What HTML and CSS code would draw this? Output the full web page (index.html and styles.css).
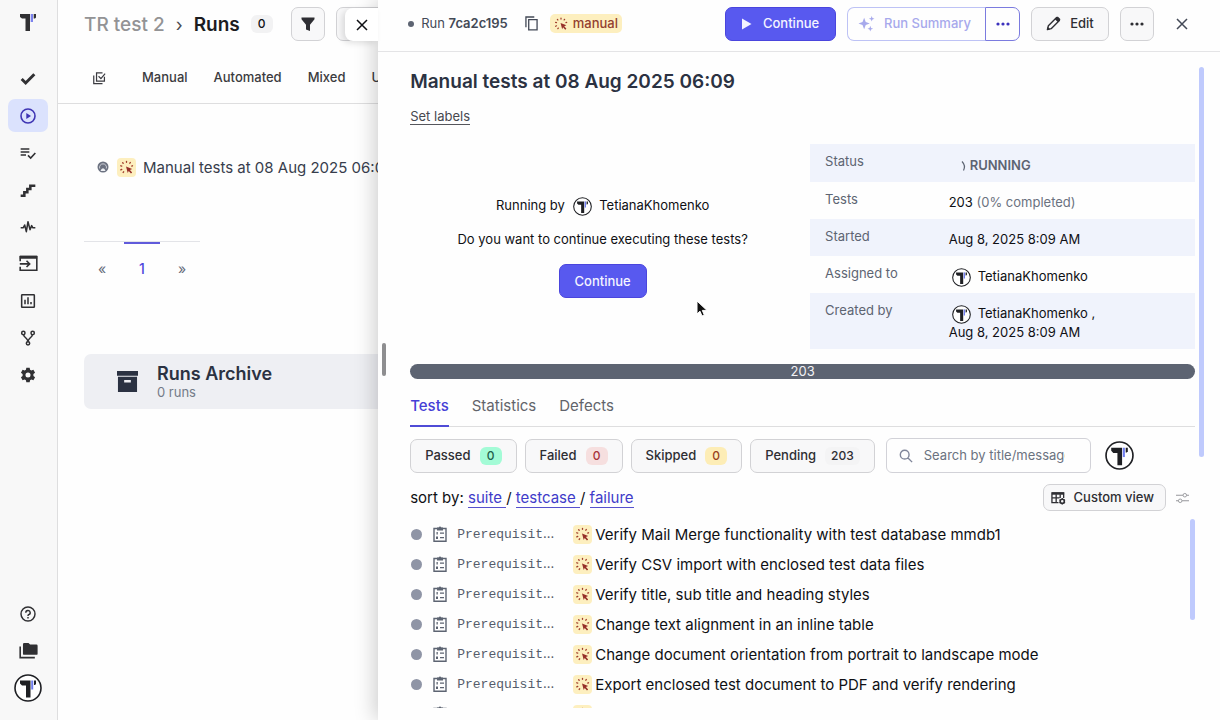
FILE: index.html
```html
<!DOCTYPE html>
<html lang="en">
<head>
<meta charset="utf-8">
<title>Runs - TR test 2</title>
<link rel="stylesheet" href="styles.css">
</head>
<body>
<svg class="sprite" aria-hidden="true">
  <symbol id="logo" viewBox="0 0 16 17"><path fill="currentColor" d="M0 0h10v17H5.500V4.500H2L0 3z"/><path fill="#7c83ee" d="M10.700 0H13v8h-2.300z"/><path fill="currentColor" d="M13.700 0H16v3.500l-1 1h-1.300z"/></symbol>
  <symbol id="avatar" viewBox="0 0 28 28"><circle cx="14" cy="14" r="13" fill="#fff" stroke="#1f2024" stroke-width="1.600"/><path fill="#1f2024" d="M6 6.500h10.500v17H12v-12H8l-2-2z"/><path fill="#6f7df0" d="M17.200 6.500h2v9h-2z"/><path fill="#1f2024" d="M20 6.500h2v3.500l-1 1h-1z"/></symbol>
  <symbol id="check" viewBox="0 0 24 24"><path fill="none" stroke="currentColor" stroke-width="4.400" d="M2.500 12l6 6L21.500 5"/></symbol>
  <symbol id="play-circle" viewBox="0 0 24 24"><circle cx="12" cy="12" r="10.500" fill="none" stroke="currentColor" stroke-width="2.400"/><path fill="currentColor" d="M9.500 7.500l7 4.500-7 4.500z"/></symbol>
  <symbol id="list-check" viewBox="0 0 24 24"><path fill="none" stroke="currentColor" stroke-width="2.400" d="M1 6h13M1 10.500h13M1 15h8M12 15.500l4 4 7-7.500"/></symbol>
  <symbol id="stairs" viewBox="0 0 24 24"><path fill="none" stroke="currentColor" stroke-width="3.800" d="M1 20.500h5.500v-5H11v-5h4.500v-5H23"/></symbol>
  <symbol id="pulse" viewBox="0 0 24 24"><path fill="none" stroke="currentColor" stroke-width="2.300" stroke-linejoin="round" d="M1 13h4l2-4 2.500 10L12 4l3 12 2.500-6 1.500 3h4"/></symbol>
  <symbol id="import" viewBox="0 0 24 24"><path fill="none" stroke="currentColor" stroke-width="2" d="M1.500 9V3.500h21v17h-21V16M1 12.500h12M9.500 8.500l4 4-4 4"/><path fill="currentColor" d="M1 2h22v4H1z"/></symbol>
  <symbol id="chart" viewBox="0 0 24 24"><rect x="2.500" y="2.500" width="19" height="19" rx="1" fill="none" stroke="currentColor" stroke-width="2.300"/><path stroke="currentColor" stroke-width="2.300" d="M7.500 17v-7M12 17V6.500M16.500 17v-3.500"/></symbol>
  <symbol id="fork" viewBox="0 0 24 24"><g fill="none" stroke="currentColor" stroke-width="2.300"><circle cx="5" cy="4.500" r="2.500"/><circle cx="19" cy="4.500" r="2.500"/><circle cx="12" cy="20" r="2.500"/><path d="M5.500 7c0 4.500 6.500 5 6.500 10.500C12 12 18.500 11.500 18.500 7"/></g></symbol>
  <symbol id="gear" viewBox="0 0 24 24"><path fill="currentColor" fill-rule="evenodd" d="M9.500 1h5l.6 3.200 1.900 1.100 3.100-1.100 2.500 4.300-2.500 2.100v2.800l2.500 2.100-2.500 4.300-3.100-1.100-1.900 1.100-.6 3.200h-5l-.6-3.200L7 18.700l-3.100 1.100-2.500-4.300 2.500-2.100v-2.800L1.400 8.500l2.500-4.300L7 5.300l1.900-1.100zM12 8.200a3.800 3.800 0 100 7.600 3.800 3.800 0 000-7.600z"/></symbol>
  <symbol id="help" viewBox="0 0 24 24"><g fill="none" stroke="currentColor" stroke-width="2.200"><circle cx="12" cy="12" r="10.500"/><path d="M8.700 10a3.300 3.300 0 113.900 3.200q-.6.200-.6 1.800"/></g><path fill="currentColor" d="M10.900 16.500h2.200v2.200h-2.200z"/></symbol>
  <symbol id="folders" viewBox="0 0 24 24"><path fill="currentColor" d="M5 4q0-1.500 1.500-1.500H12l2 2h8q1.500 0 1.500 1.500v10q0 1.500-1.500 1.500H6.500Q5 17.500 5 16z"/><path fill="none" stroke="currentColor" stroke-width="2" d="M1.500 7v14H20"/></symbol>
  <symbol id="filter" viewBox="0 0 16 16"><path fill="currentColor" d="M1.500 1.500h13v1.700L10 8.800V15l-4-1.500V8.800L1.500 3.200z"/></symbol>
  <symbol id="close" viewBox="0 0 12 12"><path stroke="currentColor" stroke-width="1.500" d="M1 1l10 10M11 1L1 11"/></symbol>
  <symbol id="multi" viewBox="0 0 16 16"><path fill="none" stroke="currentColor" stroke-width="1.400" d="M2 5v9.300h10M12 2.200H5.200V11.500h9V6.500M7.500 6l2.700 2.700L15 3"/></symbol>
  <symbol id="tap" viewBox="0 0 20 20"><path d="M5 8.500l-1-.3M5 12l-1 .5M6.500 5.500L6 5M10 4.500v-1M13.500 5.500l.5-.7M15.500 8.500l.8-.3M7 14.500l-.5.700" stroke="#a03d2c" stroke-width="1.400" stroke-linecap="round"/><path d="M9.500 9l6.500 2.500-2.400 1 2.400 2.700-1.300 1.100-2.400-2.600-1 2.200z" fill="#97302a"/></symbol>
  <symbol id="archive" viewBox="0 0 22 22"><path fill="currentColor" fill-rule="evenodd" d="M0 0h22v5H0zM1 6h20v16H1zM7.500 9.500V12h7V9.500z"/></symbol>
  <symbol id="copy" viewBox="0 0 14 16"><path fill="none" stroke="currentColor" stroke-width="1.400" d="M1 12V1h9M4 3.800h9v11H4z"/></symbol>
  <symbol id="play" viewBox="0 0 10 12"><path fill="currentColor" d="M0 .5L9.500 6 0 11.500z"/></symbol>
  <symbol id="sparkles" viewBox="0 0 18 18"><path fill="currentColor" d="M6.500 3l1.700 4.300L12.500 9l-4.300 1.700L6.500 15l-1.700-4.300L.5 9l4.300-1.700zM14.500 1l.8 2.200 2.200.8-2.200.8-.8 2.200-.8-2.200-2.200-.8 2.200-.8zM13 11.500l.8 2.200 2.200.8-2.200.8-.8 2.200-.8-2.200-2.200-.8 2.200-.8z"/></symbol>
  <symbol id="dots" viewBox="0 0 14 4"><g fill="currentColor"><circle cx="2" cy="2" r="1.600"/><circle cx="7" cy="2" r="1.600"/><circle cx="12" cy="2" r="1.600"/></g></symbol>
  <symbol id="pencil" viewBox="0 0 16 16"><path fill="none" stroke="currentColor" stroke-width="1.500" stroke-linejoin="round" d="M1.500 14.500l1-4L11.300 1.700l3 3-8.800 8.800z"/><path fill="currentColor" d="M9.500 3.500l3-3 3 3-3 3zM1 15l.8-3.500L4.500 14z"/></symbol>
  <symbol id="search" viewBox="0 0 16 16"><path fill="none" stroke="currentColor" stroke-width="1.600" d="M6.500 1.500a5 5 0 100 10 5 5 0 000-10zM10 10l5 5"/></symbol>
  <symbol id="table-gear" viewBox="0 0 16 14"><path fill="none" stroke="currentColor" stroke-width="1.400" d="M8 12H1V1.500h12.500V7M1 6.800h8M5.500 3v9M9.800 3v4"/><path fill="currentColor" d="M1 1h13v2.500H1z"/><circle cx="12" cy="10.500" r="2.200" fill="none" stroke="currentColor" stroke-width="1.700"/><path stroke="currentColor" stroke-width="1.300" d="M12 7v1M12 13v1M9 8.800l.9.500M14.100 11.700l.9.500M15 8.800l-.9.500M9.900 11.700l-.9.500"/></symbol>
  <symbol id="sliders" viewBox="0 0 14 12"><path fill="none" stroke="currentColor" stroke-width="1.100" d="M0 3h7.500M11.500 3H14M0 9h2.500M6.500 9H14"/><circle cx="9.500" cy="3" r="1.900" fill="none" stroke="currentColor"/><circle cx="4.500" cy="9" r="1.900" fill="none" stroke="currentColor"/></symbol>
  <symbol id="clipboard" viewBox="0 0 14 16"><path fill="none" stroke="currentColor" stroke-width="1.400" d="M1 2.500h12v12.700H1z"/><path fill="currentColor" d="M4 1.500h1.700a1.400 1.400 0 012.600 0H10v3H4zM7 6.500h4v1.300H7zM7 11h4v1.300H7zM3.500 6h1.300v2.500H3.500zM3 10.500h2V13H3z"/></symbol>
  <symbol id="running" viewBox="0 0 12 12"><circle cx="6" cy="6" r="5.500" fill="#6b7180"/><path fill="none" stroke="#e4e6eb" stroke-width=".8" d="M2.700 7.500a3.500 3.500 0 116.600 0"/><path fill="#eceef2" d="M3.500 10l1-2 1.500-.8L7.500 8l1 2z"/></symbol>
</svg>

<nav class="sidebar" aria-label="Main">
  <a class="logo" href="#" aria-label="Home"><svg><use href="#logo"/></svg></a>
  <div class="nav-group">
    <a href="#" aria-label="Tests"><svg><use href="#check"/></svg></a>
    <a class="active" href="#" aria-label="Runs"><svg><use href="#play-circle"/></svg></a>
    <a href="#" aria-label="Plans"><svg><use href="#list-check"/></svg></a>
    <a href="#" aria-label="Steps"><svg><use href="#stairs"/></svg></a>
    <a href="#" aria-label="Pulse"><svg><use href="#pulse"/></svg></a>
    <a href="#" aria-label="Imports"><svg class="wide"><use href="#import"/></svg></a>
    <a href="#" aria-label="Analytics"><svg><use href="#chart"/></svg></a>
    <a href="#" aria-label="Branches"><svg><use href="#fork"/></svg></a>
    <a href="#" aria-label="Settings"><svg><use href="#gear"/></svg></a>
  </div>
  <div class="nav-group nav-bottom">
    <a href="#" aria-label="Help"><svg><use href="#help"/></svg></a>
    <a href="#" aria-label="Projects"><svg class="wide"><use href="#folders"/></svg></a>
    <a href="#" aria-label="Profile"><svg class="profile"><use href="#avatar"/></svg></a>
  </div>
</nav>

<main class="runs">
  <header class="runs-head">
    <a class="crumb" href="#">TR test 2</a>
    <span class="sep">›</span>
    <h1>Runs</h1>
    <span class="count">0</span>
    <button class="btn square filter-btn" aria-label="Filter"><svg><use href="#filter"/></svg></button>
    <button class="btn query-btn" aria-label="Query"></button>
  </header>
  <div class="runs-tabs">
    <button aria-label="Select multiple"><svg><use href="#multi"/></svg></button>
    <a href="#">Manual</a>
    <a href="#">Automated</a>
    <a href="#">Mixed</a>
    <a href="#">Unfinished</a>
  </div>
  <div class="runs-body">
    <a class="run-row" href="#">
      <svg class="state"><use href="#running"/></svg>
      <svg class="tap"><use href="#tap"/></svg>
      <span>Manual tests at 08 Aug 2025 06:09</span>
    </a>
    <div class="pager">
      <button aria-label="Previous">«</button>
      <button class="current">1</button>
      <button aria-label="Next">»</button>
    </div>
    <a class="archive" href="#">
      <svg><use href="#archive"/></svg>
      <span><strong>Runs Archive</strong><small>0 runs</small></span>
    </a>
  </div>
</main>

<aside class="panel">
  <button class="panel-close" aria-label="Close panel"><svg class="x"><use href="#close"/></svg></button>
  <span class="grip"></span>
  <header class="panel-head">
    <span class="dot"></span>
    <span class="run-id">Run <b>7ca2c195</b></span>
    <button class="icon-btn copy" aria-label="Copy id"><svg><use href="#copy"/></svg></button>
    <span class="kind"><svg><use href="#tap"/></svg>manual</span>
    <div class="actions">
      <button class="btn primary launch"><svg><use href="#play"/></svg>Continue</button>
      <div class="split">
        <button class="summary" disabled><svg><use href="#sparkles"/></svg>Run Summary</button>
        <button class="summary-more" aria-label="Summary options"><svg class="dots"><use href="#dots"/></svg></button>
      </div>
      <button class="btn edit"><svg><use href="#pencil"/></svg>Edit</button>
      <button class="btn square" aria-label="More"><svg class="dots"><use href="#dots"/></svg></button>
      <button class="icon-btn end-close" aria-label="Close"><svg class="x"><use href="#close"/></svg></button>
    </div>
  </header>
  <div class="panel-body">
    <h2>Manual tests at 08 Aug 2025 06:09</h2>
    <a class="set-labels" href="#">Set labels</a>

    <section class="overview">
      <div class="resume">
        <p>Running by <svg class="user"><use href="#avatar"/></svg> TetianaKhomenko</p>
        <p>Do you want to continue executing these tests?</p>
        <button class="btn primary">Continue</button>
      </div>
      <table class="facts">
        <tr><th scope="row">Status</th><td class="status"><svg viewBox="0 0 6 12"><path d="M1 1.500q4 4 1.500 9" fill="none" stroke="currentColor" stroke-width="1.200"/></svg>RUNNING</td></tr>
        <tr><th scope="row">Tests</th><td>203 <span class="muted">(0% completed)</span></td></tr>
        <tr><th scope="row">Started</th><td>Aug 8, 2025 8:09 AM</td></tr>
        <tr><th scope="row">Assigned to</th><td><svg class="user"><use href="#avatar"/></svg>TetianaKhomenko</td></tr>
        <tr><th scope="row">Created by</th><td><svg class="user"><use href="#avatar"/></svg>TetianaKhomenko ,<br>Aug 8, 2025 8:09 AM</td></tr>
      </table>
    </section>

    <div class="progress">203</div>

    <nav class="tabs">
      <a class="active" href="#">Tests</a>
      <a href="#">Statistics</a>
      <a href="#">Defects</a>
    </nav>

    <div class="filters">
      <button class="btn">Passed <span class="tag green">0</span></button>
      <button class="btn">Failed <span class="tag red">0</span></button>
      <button class="btn">Skipped <span class="tag yellow">0</span></button>
      <button class="btn pending">Pending <span class="tag gray">203</span></button>
      <label class="search"><svg><use href="#search"/></svg><input type="text" placeholder="Search by title/message" aria-label="Search by title or message"></label>
      <button class="icon-btn" aria-label="Filter by user"><svg class="assignee"><use href="#avatar"/></svg></button>
    </div>

    <div class="sortbar">
      <p>sort by: <a href="#">suite&nbsp;</a>/ <a href="#">testcase&nbsp;</a>/ <a href="#">failure</a></p>
      <div class="view">
        <button class="btn view-btn"><svg><use href="#table-gear"/></svg>Custom view</button>
        <button class="icon-btn" aria-label="View settings"><svg class="sliders"><use href="#sliders"/></svg></button>
      </div>
    </div>

    <div class="list-wrap">
      <ul class="list">
        <li><i></i><svg class="clip"><use href="#clipboard"/></svg><span class="suite">Prerequisit<span>...</span></span><svg class="tap"><use href="#tap"/></svg><a href="#">Verify Mail Merge functionality with test database mmdb1</a></li>
        <li><i></i><svg class="clip"><use href="#clipboard"/></svg><span class="suite">Prerequisit<span>...</span></span><svg class="tap"><use href="#tap"/></svg><a href="#">Verify CSV import with enclosed test data files</a></li>
        <li><i></i><svg class="clip"><use href="#clipboard"/></svg><span class="suite">Prerequisit<span>...</span></span><svg class="tap"><use href="#tap"/></svg><a href="#">Verify title, sub title and heading styles</a></li>
        <li><i></i><svg class="clip"><use href="#clipboard"/></svg><span class="suite">Prerequisit<span>...</span></span><svg class="tap"><use href="#tap"/></svg><a href="#">Change text alignment in an inline table</a></li>
        <li><i></i><svg class="clip"><use href="#clipboard"/></svg><span class="suite">Prerequisit<span>...</span></span><svg class="tap"><use href="#tap"/></svg><a href="#">Change document orientation from portrait to landscape mode</a></li>
        <li><i></i><svg class="clip"><use href="#clipboard"/></svg><span class="suite">Prerequisit<span>...</span></span><svg class="tap"><use href="#tap"/></svg><a href="#">Export enclosed test document to PDF and verify rendering</a></li>
        <li><i></i><svg class="clip"><use href="#clipboard"/></svg><span class="suite">Prerequisit<span>...</span></span><svg class="tap"><use href="#tap"/></svg><a href="#">Add images and text attributes to the margin</a></li>
      </ul>
      <span class="thumb list-thumb"></span>
    </div>
  </div>
  <span class="thumb panel-thumb"></span>
  <svg class="pointer" viewBox="0 0 12 18"><path d="M1 1v13l3-2.800 2 4.800 2.300-1-2-4.600H11z" fill="#111" stroke="#fff"/></svg>
</aside>
</body>
</html>
```
FILE: styles.css
```css
* { box-sizing: border-box; }
body {
  margin: 0;
  height: 100vh;
  display: flex;
  position: relative;
  overflow: hidden;
  background: #fefefe;
  color: #0f1014;
  font: 13px/19px Inter, "Noto Sans", sans-serif;
}
h1, h2, p, ul { margin: 0; padding: 0; }
a { color: inherit; text-decoration: none; }
button { font: inherit; color: inherit; background: none; border: 0; padding: 0; }
svg { display: block; flex: none; }
.sprite { position: absolute; width: 0; height: 0; }

/* Sidebar */
.sidebar {
  width: 58px;
  flex: none;
  display: flex;
  flex-direction: column;
  align-items: center;
  padding: 14px 1px 16px 0;
  background: #f8f8f8;
  border-right: 1px solid #dededf;
  color: #303033;
}
.logo svg { width: 16px; height: 17px; }
.logo { margin-bottom: 31px; }
.nav-group { display: flex; flex-direction: column; gap: 4px; }
.nav-group a {
  width: 40px;
  height: 33px;
  border-radius: 7px;
  display: grid;
  place-items: center;
}
.nav-group svg { width: 16px; height: 16px; }
.nav-group .wide { width: 19px; height: 19px; }
.nav-group .profile { width: 28px; height: 28px; }
.nav-group .active { background: #dbe2fd; color: #3f35b4; }
.nav-bottom { margin-top: auto; }

/* Shared controls */
.btn {
  height: 34px;
  display: inline-flex;
  align-items: center;
  justify-content: center;
  background: #f8f8f9;
  border: 1px solid #d2d2d5;
  border-radius: 7px;
  color: #2e2e33;
  font-size: 13px;
  font-weight: 500;
  white-space: nowrap;
}
.btn.square { width: 34px; }
.btn.primary { background: #5859ef; border-color: #4a45dd; color: #f4f4ff; }
.icon-btn { display: grid; place-items: center; }
.dots { width: 14px; height: 4px; }
.x { width: 12px; height: 12px; }
.tap { width: 19px; height: 19px; border-radius: 4px; background: #fdefbf; }
.user { width: 19px; height: 19px; display: inline-block; vertical-align: middle; }
.thumb { width: 5px; border-radius: 3px; background: #bfcafd; }

/* Runs column */
.runs { flex: 1; min-width: 0; overflow: hidden; }
.runs-head {
  height: 48px;
  display: flex;
  align-items: center;
  padding-left: 26px;
}
.crumb { font-size: 19px; font-weight: 500; color: #939395; white-space: nowrap; }
.sep { margin: 0 11px; font-size: 18px; color: #4b4b50; }
h1 { font-size: 19px; font-weight: 600; color: #1c1c1f; }
.count {
  margin-left: 11px;
  width: 22px;
  line-height: 18px;
  border-radius: 6px;
  background: #f2f2f3;
  font-size: 12px;
  font-weight: 500;
  text-align: center;
}
.filter-btn { margin: 0 11px 0 18px; }
.filter-btn svg { width: 16px; height: 16px; }
.query-btn { width: 160px; }
.runs-tabs {
  height: 56px;
  display: flex;
  align-items: center;
  gap: 26px;
  padding: 4px 0 0 34px;
  border-bottom: 1px solid #dededf;
  font-size: 13px;
  font-weight: 500;
  color: #3b3b40;
}
.runs-tabs svg { width: 14px; height: 14px; }
.runs-tabs button { margin-right: 10px; }
.runs-body { padding: 53px 26px 0; }
.run-row {
  display: flex;
  align-items: center;
  height: 20px;
  padding-left: 13px;
  font-size: 15px;
  color: #373d4c;
  white-space: nowrap;
}
.state { width: 12px; height: 12px; margin-right: 8px; }
.run-row .tap { margin-right: 7px; }
.pager {
  display: grid;
  grid-template-columns: 36px 44px 36px;
  width: 116px;
  margin-top: 64px;
  border-top: 1px solid #e3e4e8;
  color: #626978;
  font-size: 14px;
}
.pager button { height: 50px; padding-top: 2px; }
.pager .current {
  margin: 0 4px;
  border-top: 2px solid #605bdb;
  padding-top: 0;
  color: #4f48dd;
  font-weight: 500;
}
.archive {
  display: flex;
  align-items: center;
  gap: 19px;
  height: 55px;
  margin-top: 62px;
  padding-left: 33px;
  border-radius: 7px;
  background: #eeeff3;
  color: #2b3242;
}
.archive svg { width: 21px; height: 21px; }
.archive strong { display: block; font-size: 18px; line-height: 20px; font-weight: 600; }
.archive small { display: block; font-size: 13px; line-height: 16px; color: #747b88; }

/* Detail panel, laid over the runs list */
.panel {
  position: absolute;
  top: 0;
  right: 0;
  bottom: 0;
  left: 31%;
  display: flex;
  flex-direction: column;
  background: #fefefe;
  box-shadow: -3px 0 20px rgba(0, 0, 0, .2);
}
.panel-close {
  position: absolute;
  top: 8px;
  right: 100%;
  width: 33px;
  height: 33px;
  display: grid;
  place-items: center;
  border-radius: 8px 0 0 8px;
  background: #fff;
  box-shadow: -3px 2px 6px rgba(0, 0, 0, .12);
}
.grip {
  position: absolute;
  top: 343px;
  left: 4px;
  width: 4px;
  height: 33px;
  border-radius: 2px;
  background: #8e8e90;
}
.panel-head {
  height: 52px;
  flex: none;
  display: flex;
  align-items: center;
  padding: 0 21px 4px 30px;
  border-bottom: 1px solid #e4e4e6;
  color: #434956;
  white-space: nowrap;
}
.dot { width: 6px; height: 6px; margin-right: 7px; border-radius: 50%; background: #5d6472; }
.run-id { font-size: 13px; }
.run-id b { font-weight: 600; }
.copy { margin: 0 12px 0 17px; }
.copy svg { width: 13px; height: 15px; }
.kind {
  display: flex;
  align-items: center;
  gap: 3px;
  padding: 0 4px 0 2px;
  border-radius: 5px;
  background: #fdefbf;
  color: #93402f;
  font-size: 13px;
  font-weight: 500;
}
.kind svg { width: 18px; height: 18px; }
.actions { display: flex; align-items: center; gap: 11px; margin-left: auto; }
.launch { width: 111px; gap: 11px; }
.launch svg { width: 10px; height: 12px; }
.split { display: flex; font-size: 13px; font-weight: 500; }
.split button { height: 34px; display: flex; align-items: center; }
.summary {
  gap: 9px;
  padding: 0 14px 0 10px;
  border: 1px solid #bdc2f5;
  border-right: 0;
  border-radius: 7px 0 0 7px;
  color: #a7a9ec;
}
.summary svg { width: 17px; height: 17px; }
.summary-more {
  width: 35px;
  justify-content: center;
  border: 1px solid #7b7bdf;
  border-radius: 0 7px 7px 0;
  color: #3c32bd;
}
.edit { width: 78px; gap: 9px; }
.edit svg { width: 15px; height: 15px; }
.end-close { width: 34px; height: 34px; }

.panel-body {
  flex: 1;
  min-height: 0;
  display: flex;
  flex-direction: column;
  align-items: stretch;
  padding: 18px 25px 12px 32px;
}
h2 { font-size: 19px; line-height: 24px; font-weight: 600; color: #2b3242; }
.set-labels {
  align-self: flex-start;
  margin-top: 14px;
  line-height: 16px;
  border-bottom: 1px solid #55565c;
  font-size: 13px;
  color: #47484e;
}
.overview {
  display: grid;
  grid-template-columns: 1fr 1fr;
  gap: 15px;
  margin-top: 19px;
}
.resume {
  display: flex;
  flex-direction: column;
  align-items: center;
  gap: 15px;
  padding-top: 52px;
}
.resume .user { margin: -2px 4px; }
.resume .primary { padding: 0 15px; }
.facts { width: 100%; border-collapse: collapse; }
.facts tr:nth-child(odd) { background: #f0f3fc; }
.facts th {
  width: 36%;
  padding: 8px 0 0 15px;
  text-align: left;
  vertical-align: top;
  font-weight: 400;
  color: #5d6472;
}
.facts td { height: 37px; padding: 11px 0 7px; line-height: 19px; }
.facts tr:first-child td { height: 38px; }
.facts .user { margin: -2px 7px -2px 3px; }
.facts .status { color: #5d6472; font-weight: 600; }
.status svg { display: inline-block; width: 6px; height: 12px; margin: 0 3px 0 12px; vertical-align: middle; }
.muted { color: #6b7280; }
.progress {
  flex: none;
  height: 15px;
  margin-top: 15px;
  border-radius: 8px;
  background: #5d6472;
  color: #f1f2f5;
  line-height: 15px;
  text-align: center;
}
.tabs {
  display: flex;
  gap: 23px;
  margin-top: 15px;
  border-bottom: 1px solid #dededf;
  font-size: 15px;
  line-height: 24px;
  color: #62646b;
}
.tabs a { margin-bottom: -1px; padding-bottom: 7px; border-bottom: 2px solid transparent; }
.tabs .active { color: #4540d6; border-color: #4f4bd6; font-weight: 500; }
.filters { display: flex; align-items: center; margin-top: 11px; }
.filters .btn { gap: 9px; padding: 0 14px; margin-right: 8px; }
.filters .pending { margin-right: 11px; }
.tag { min-width: 22px; line-height: 18px; border-radius: 6px; font-size: 12px; text-align: center; }
.green { background: #a3fbd6; color: #22604b; }
.red { background: #f6dfdf; color: #a8323a; }
.yellow { background: #fdedb6; color: #98421f; }
.gray { padding: 0 6px; background: #f4f4f5; }
.search {
  flex: 0 1 205px;
  min-width: 0;
  height: 35px;
  display: flex;
  align-items: center;
  gap: 11px;
  margin-right: 14px;
  padding: 0 25px 0 12px;
  border: 1px solid #d2d2d8;
  border-radius: 6px;
  color: #80869a;
}
.search svg { width: 14px; height: 14px; }
.search input {
  flex: 1;
  min-width: 0;
  padding: 0;
  border: 0;
  outline: 0;
  background: none;
  font: inherit;
}
.search input::placeholder { color: #6b7280; }
.assignee { width: 29px; height: 29px; }
.sortbar {
  display: flex;
  align-items: center;
  justify-content: space-between;
  margin-top: 11px;
  font-size: 15px;
}
.sortbar a { color: #403bc9; border-bottom: 1px solid #5651ce; }
.view { display: flex; align-items: center; gap: 10px; margin-right: 6px; }
.view-btn { height: 27px; gap: 8px; padding: 0 11px 0 7px; }
.view-btn svg { width: 15px; height: 14px; }
.sliders { width: 13px; height: 12px; color: #96979c; }
.list-wrap { flex: 1; min-height: 0; display: flex; padding-top: 8px; }
.list { flex: 1; min-width: 0; overflow: hidden; list-style: none; font-size: 15px; }
.list li { display: flex; align-items: center; height: 30px; white-space: nowrap; }
.list i { width: 11px; height: 11px; margin: 0 11px 0 1px; border-radius: 50%; background: #8f95a6; }
.clip { width: 14px; height: 16px; margin-right: 10px; color: #5d6472; }
.suite { width: 116px; font: 13px/18px "Liberation Mono", monospace; color: #555c6b; }
.suite span { font-family: Inter, sans-serif; }
.list .tap { margin-right: 3px; }
.list-thumb { height: 101px; }
.panel-thumb { position: absolute; top: 67px; right: 16px; height: 390px; }
.pointer { position: absolute; top: 300px; left: 318px; width: 12px; height: 18px; }
```
